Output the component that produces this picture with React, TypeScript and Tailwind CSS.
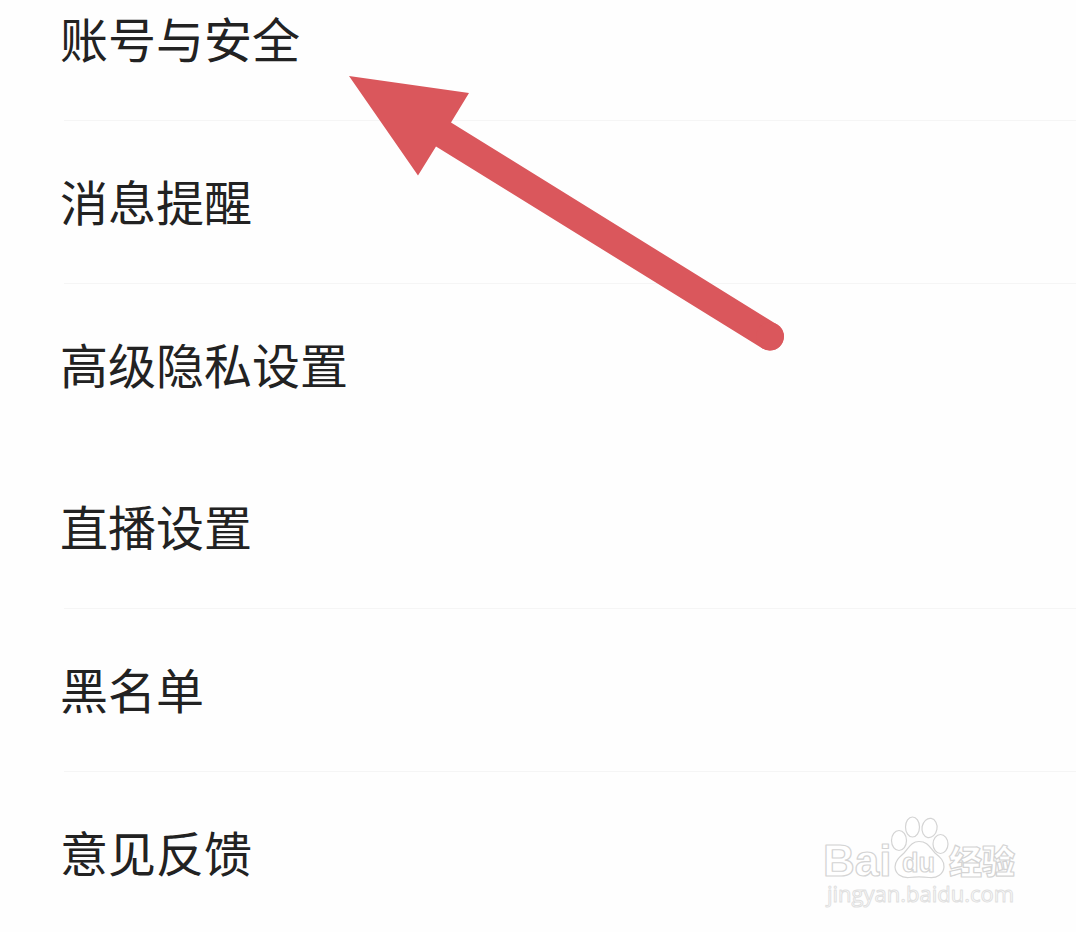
type Setting = { label: string; divided: boolean };

const settings: Setting[] = [
  { label: "账号与安全", divided: true },
  { label: "消息提醒", divided: true },
  { label: "高级隐私设置", divided: false },
  { label: "直播设置", divided: true },
  { label: "黑名单", divided: true },
  { label: "意见反馈", divided: false },
];

function SettingRow({ label, divided }: Setting) {
  return (
    <li className={divided ? "border-b border-[#f5f5f5]" : ""}>
      <button
        type="button"
        className="-ml-1 flex h-[162px] w-full items-center pb-1 text-left text-5xl text-[#222222]"
      >
        {label}
      </button>
    </li>
  );
}

function Arrow() {
  return (
    <svg
      className="pointer-events-none absolute top-[70px] left-[340px]"
      width="460"
      height="290"
      viewBox="340 70 460 290"
      aria-hidden="true"
    >
      <g fill="#da575c">
        <path d="M349 76L469 93L451 122.500L777 324.500A14 14 0 0 1 762.500 348.500L436 146.500L418 175.500Z" />
        <circle cx="770" cy="336.500" r="14" />
      </g>
    </svg>
  );
}

function Watermark() {
  return (
    <svg
      className="pointer-events-none absolute top-[810px] right-[46px]"
      width="210"
      height="105"
      viewBox="820 810 210 105"
      role="img"
      aria-label="Baidu 经验 jingyan.baidu.com"
    >
      <g fill="#ffffff" stroke="#d4d4d4" strokeWidth="1.2" strokeLinejoin="round">
        <text x="823" y="876" fontSize="44" fontWeight="700" fontFamily="'Liberation Sans', sans-serif">Bai</text>
        <ellipse cx="899" cy="840.500" rx="7.500" ry="10" />
        <ellipse cx="912.500" cy="827" rx="7" ry="10" />
        <ellipse cx="929.500" cy="828" rx="7.500" ry="9.700" transform="rotate(10 929.5 828)" />
        <ellipse cx="940.500" cy="844" rx="7.500" ry="9.500" />
        <path d="M919 841.500C911 841.500 909 848 904 853C899 857.500 895 861 895 867C895.500 874 901 878 909 877.500C916 876.500 922 876.500 929 877.500C937 878.500 943.500 874 944 867C944.500 861 940 857 935 853C930 848 928 841.500 919 841.500Z" />
        <text x="902" y="872" fontSize="27" fontWeight="700" fontFamily="'Liberation Sans', sans-serif">du</text>
        <text x="949" y="874" fontSize="33" fontWeight="900" fontFamily="'Noto Sans CJK SC', sans-serif">经验</text>
        <text x="827" y="902" fontSize="22" fontWeight="500" strokeWidth="1" stroke="#e0e0e0" fontFamily="'Open Sans', sans-serif">jingyan.baidu.com</text>
      </g>
    </svg>
  );
}

export default function App() {
  return (
    <main
      lang="zh-CN"
      className="relative min-h-screen overflow-hidden bg-[#fefefe] font-['Noto_Sans_CJK_SC',sans-serif]"
    >
      <ul className="-mt-[42px] -mb-4 ml-16">
        {settings.map((item) => (
          <SettingRow key={item.label} {...item} />
        ))}
      </ul>
      <Arrow />
      <Watermark />
    </main>
  );
}
